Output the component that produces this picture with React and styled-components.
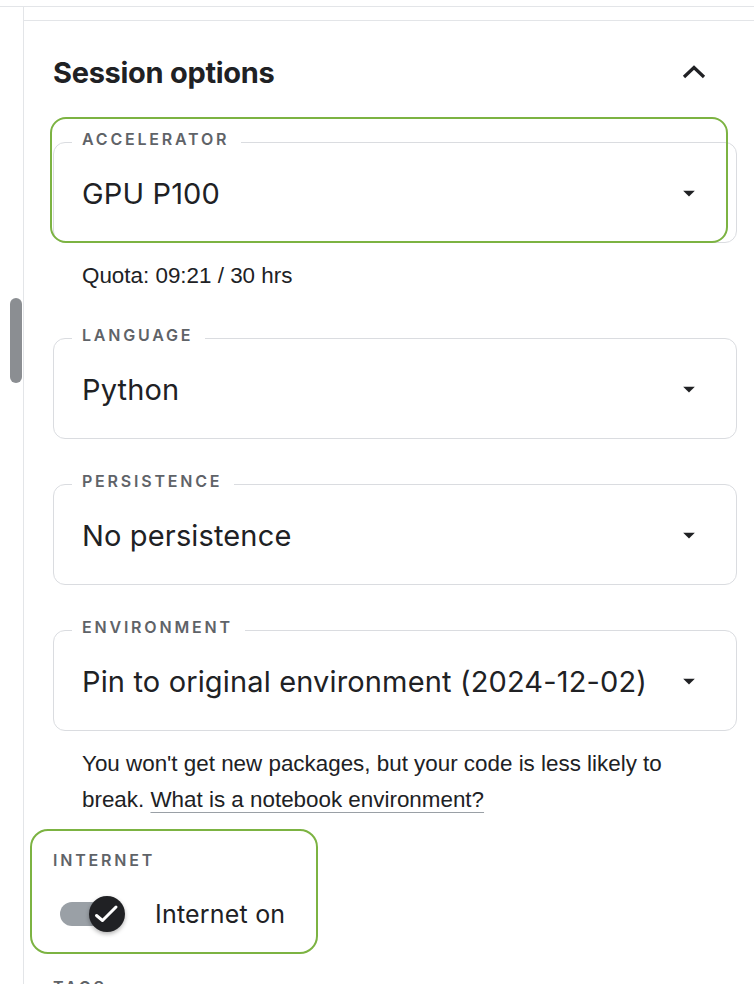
import React from 'react';
import styled, { createGlobalStyle } from 'styled-components';

const GlobalStyle = createGlobalStyle`
  html, body {
    margin: 0;
    padding: 0;
    background: #ffffff;
  }
  body {
    font-family: Inter, "Noto Sans", sans-serif;
    color: #202124;
  }
`;

const Page = styled.div`
  width: 754px;
  height: 984px;
  overflow: hidden;
  display: flex;
  flex-direction: column;
`;

const TopStrip = styled.div`
  height: 6px;
  flex-shrink: 0;
  border-bottom: 1px solid #e3e5e8;
`;

const Body = styled.div`
  flex: 1;
  display: flex;
`;

const Gutter = styled.div`
  width: 23px;
  flex-shrink: 0;
  border-right: 1px solid #e3e5e8;
`;

const ScrollThumb = styled.div`
  margin: 291px 0 0 10px;
  width: 12px;
  height: 85px;
  border-radius: 6px;
  background: #8b8e92;
`;

const Main = styled.div`
  flex: 1;
  min-width: 0;
`;

const HeaderStrip = styled.div`
  height: 13px;
  border-bottom: 1px solid #e3e5e8;
`;

const Content = styled.div`
  padding: 0 17px 0 29px;
`;

const HeadingRow = styled.div`
  margin-top: 31px;
  height: 40px;
  display: flex;
  align-items: center;
  justify-content: space-between;
`;

const Heading = styled.h2`
  margin: 0;
  font-size: 29px;
  font-weight: 700;
  letter-spacing: -0.3px;
  color: #202124;
`;

const CollapseButton = styled.div`
  width: 40px;
  height: 40px;
  margin-right: 23px;
  display: flex;
  align-items: center;
  justify-content: center;
  color: #202124;
`;

const FieldWrap = styled.div`
  position: relative;
  margin-top: ${p => p.$top}px;
`;

const Highlight = styled.div`
  position: absolute;
  top: ${p => p.$top}px;
  left: ${p => p.$left}px;
  width: ${p => p.$width}px;
  height: ${p => p.$height}px;
  border: 2.5px solid #7cb342;
  border-radius: ${p => p.$radius}px;
  box-sizing: border-box;
  pointer-events: none;
`;

const Field = styled.fieldset`
  margin: 0;
  min-width: 0;
  padding: 0 33px 9px 28px;
  border: 1px solid #dadce0;
  border-radius: 12px;
`;

const Legend = styled.legend`
  margin-left: -10px;
  padding: 0 12px 6px 10px;
  font-size: 16px;
  line-height: 16px;
  font-weight: 600;
  letter-spacing: 2.8px;
  text-transform: uppercase;
  color: #5f6368;
`;

const ValueRow = styled.div`
  height: 80px;
  display: flex;
  align-items: center;
  justify-content: space-between;
`;

const Value = styled.span`
  font-size: 29px;
  font-weight: 400;
  letter-spacing: 0.15px;
  color: #202124;
  white-space: nowrap;
`;

const Hint = styled.div`
  margin-top: ${p => p.$top}px;
  padding: 0 29px;
  font-family: "Liberation Sans", Arial, sans-serif;
  font-size: 22.4px;
  line-height: ${p => p.$lh}px;
  color: #202124;
`;

const HelpLink = styled.a`
  color: #202124;
  text-decoration: underline;
  text-decoration-color: #9aa0a6;
  text-decoration-thickness: 1px;
  text-underline-offset: 5px;
`;

const SectionLabel = styled.div`
  font-size: 16px;
  line-height: 20px;
  font-weight: 600;
  letter-spacing: 2.8px;
  text-transform: uppercase;
  color: #5f6368;
  margin-top: ${p => p.$top || 0}px;
`;

const InternetSection = styled.div`
  position: relative;
  margin-top: 32px;
`;

const ToggleRow = styled.div`
  margin-top: 24px;
  height: 40px;
  display: flex;
  align-items: center;
  gap: 29px;
  padding-left: 7px;
`;

const Switch = styled.div`
  position: relative;
  width: 66px;
  height: 36px;
  flex-shrink: 0;
`;

const Track = styled.div`
  position: absolute;
  left: 0;
  top: 6px;
  width: 56px;
  height: 24px;
  border-radius: 12px;
  background: #9aa0a6;
`;

const Thumb = styled.div`
  position: absolute;
  left: 29px;
  top: 0;
  width: 36px;
  height: 36px;
  border-radius: 50%;
  background: #202124;
  box-shadow: 0 2px 4px rgba(0, 0, 0, 0.3);
  display: flex;
  align-items: center;
  justify-content: center;
`;

const ToggleText = styled.span`
  font-size: 25px;
  letter-spacing: 0.2px;
  color: #202124;
`;

const ChevronUp = () => (
  <svg width="26" height="16" viewBox="0 0 26 16" fill="none">
    <polyline points="3,13 13,3.5 23,13" stroke="currentColor" strokeWidth="3.2" />
  </svg>
);

const DropArrow = () => (
  <svg width="28" height="28" viewBox="0 0 24 24">
    <path d="M7 10l5 5 5-5z" fill="#202124" />
  </svg>
);

const Check = () => (
  <svg width="36" height="36" viewBox="0 0 36 36" fill="none">
    <polyline points="7.5,19.5 13.5,24.5 27,11" stroke="#ffffff" strokeWidth="3" strokeLinecap="round" strokeLinejoin="round" />
  </svg>
);

const SelectField = ({ label, value }) => (
  <Field>
    <Legend>{label}</Legend>
    <ValueRow>
      <Value>{value}</Value>
      <DropArrow />
    </ValueRow>
  </Field>
);

export default function App() {
  return (
    <>
      <GlobalStyle />
      <Page>
        <TopStrip />
        <Body>
          <Gutter>
            <ScrollThumb />
          </Gutter>
          <Main>
            <HeaderStrip />
            <Content>
              <HeadingRow>
                <Heading>Session options</Heading>
                <CollapseButton>
                  <ChevronUp />
                </CollapseButton>
              </HeadingRow>

              <FieldWrap $top={39}>
                <SelectField label="Accelerator" value="GPU P100" />
                <Highlight $top={-14} $left={-3} $width={678} $height={126} $radius={16} />
              </FieldWrap>

              <Hint $top={21} $lh={24}>Quota: 09:21 / 30 hrs</Hint>

              <FieldWrap $top={39}>
                <SelectField label="Language" value="Python" />
              </FieldWrap>

              <FieldWrap $top={34}>
                <SelectField label="Persistence" value="No persistence" />
              </FieldWrap>

              <FieldWrap $top={34}>
                <SelectField label="Environment" value="Pin to original environment (2024-12-02)" />
              </FieldWrap>

              <Hint $top={15} $lh={36}>
                You won't get new packages, but your code is less likely to break.{' '}
                <HelpLink href="#">What is a notebook environment?</HelpLink>
              </Hint>

              <InternetSection>
                <SectionLabel>Internet</SectionLabel>
                <ToggleRow>
                  <Switch>
                    <Track />
                    <Thumb>
                      <Check />
                    </Thumb>
                  </Switch>
                  <ToggleText>Internet on</ToggleText>
                </ToggleRow>
                <Highlight $top={-21} $left={-23} $width={288} $height={125} $radius={18} />
              </InternetSection>

              <SectionLabel $top={43}>Tags</SectionLabel>
            </Content>
          </Main>
        </Body>
      </Page>
    </>
  );
}
